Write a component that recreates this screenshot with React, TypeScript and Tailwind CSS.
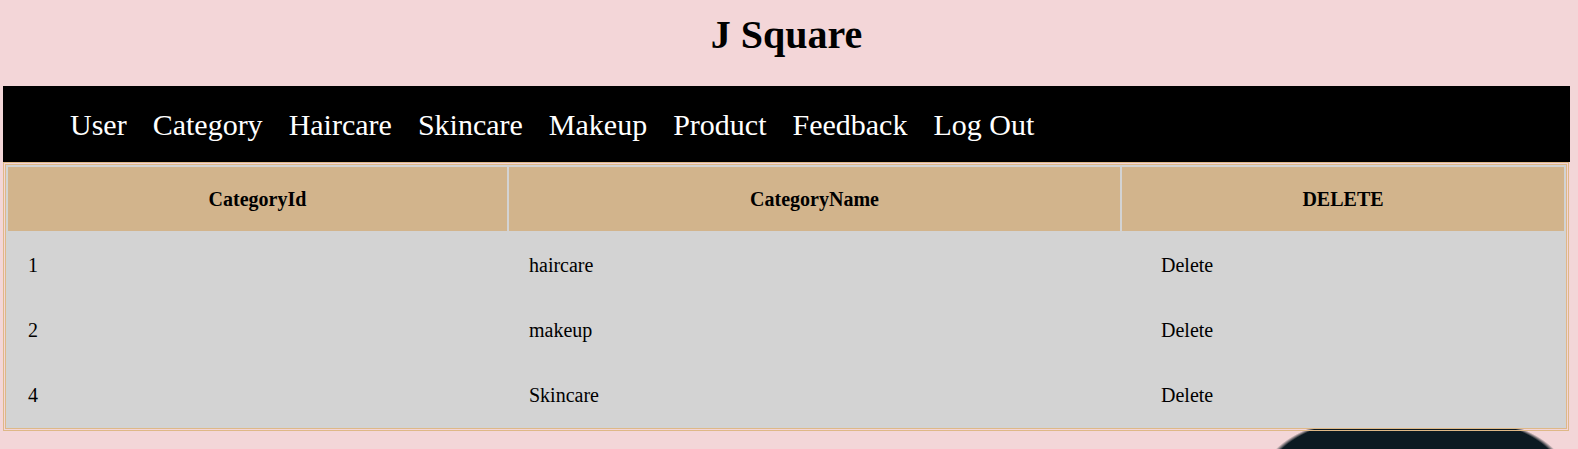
// Admin category list: title, black nav bar, and the category table.

const navItems = ["User", "Category", "Haircare", "Skincare", "Makeup", "Product", "Feedback", "Log Out"];

const categories = [
  { id: 1, name: "haircare" },
  { id: 2, name: "makeup" },
  { id: 4, name: "Skincare" },
];

export default function App() {
  return (
    <div
      className="min-h-screen w-full bg-[#f3d6d8] bg-[radial-gradient(ellipse_150px_62px_at_1415px_472px,#0c1a22_0,#0c1a22_96%,transparent_100%)] font-['Liberation_Serif','Times_New_Roman',serif] text-black"
    >
      <div className="pl-[3px] pr-[8px]">
        <div className="h-[86px] pt-[12px] text-center">
          <h1 className="text-[40px] font-bold leading-[46px]">J Square</h1>
        </div>

        <nav className="flex h-[76px] items-center gap-[26px] bg-black pl-[67px] text-[30px] text-white">
          {navItems.map((item) => (
            <a key={item} href="#" className="leading-normal">
              {item}
            </a>
          ))}
        </nav>

        <table className="w-[1566px] table-fixed border-separate border-spacing-[2px] border-[3px] border-double border-[#deb887] bg-[#d3d3d3] bg-clip-padding text-[20px]">
          <colgroup>
            <col className="w-[499px]" />
            <col className="w-[611px]" />
            <col className="w-[442px]" />
          </colgroup>
          <thead>
            <tr>
              <th className="h-[64px] bg-[#d2b48c] text-center font-bold">CategoryId</th>
              <th className="h-[64px] bg-[#d2b48c] text-center font-bold">CategoryName</th>
              <th className="h-[64px] bg-[#d2b48c] text-center font-bold">DELETE</th>
            </tr>
          </thead>
          <tbody>
            {categories.map((c) => (
              <tr key={c.id}>
                <td className="h-[63px] pl-[20px] text-left">{c.id}</td>
                <td className="h-[63px] pl-[20px] text-left">{c.name}</td>
                <td className="h-[63px] pl-[39px] text-left">
                  <a href="#" className="text-black">
                    Delete
                  </a>
                </td>
              </tr>
            ))}
          </tbody>
        </table>
      </div>
    </div>
  );
}
